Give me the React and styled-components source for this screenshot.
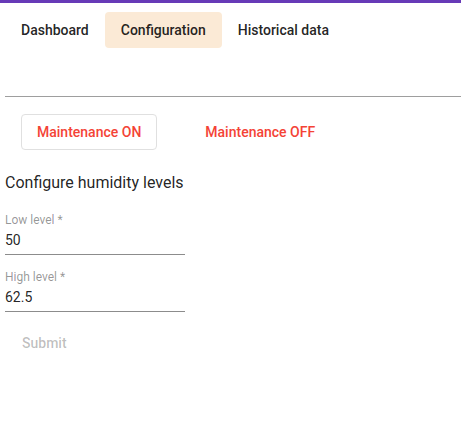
import React, { useState } from "react";
import styled, { createGlobalStyle } from "styled-components";

const GlobalStyle = createGlobalStyle`
    body {
        margin: 0;
        background: #ffffff;
        font-family: Roboto, "Noto Sans", Arial, sans-serif;
        color: rgba(0, 0, 0, 0.87);
    }
`;

const tabs = ["Dashboard", "Configuration", "Historical data"];

const App = () => {
    const [tab, setTab] = useState("Configuration");
    const [low, setLow] = useState("50");
    const [high, setHigh] = useState("62.5");

    return (
        <>
            <GlobalStyle />
            <Page>
                <TopBar />
                <TabRow>
                    {tabs.map((t) => (
                        <Tab key={t} $active={t === tab} onClick={() => setTab(t)}>
                            {t}
                        </Tab>
                    ))}
                </TabRow>
                <Divider />
                <Content>
                    <MaintenanceRow>
                        <RedButton $outlined>Maintenance ON</RedButton>
                        <RedButton>Maintenance OFF</RedButton>
                    </MaintenanceRow>
                    <Heading>Configure humidity levels</Heading>
                    <Field $gap={18}>
                        <Label>Low level *</Label>
                        <Input value={low} onChange={(e) => setLow(e.target.value)} />
                    </Field>
                    <Field $gap={15}>
                        <Label>High level *</Label>
                        <Input value={high} onChange={(e) => setHigh(e.target.value)} />
                    </Field>
                    <Submit disabled>Submit</Submit>
                </Content>
            </Page>
        </>
    );
};

export default App;

const Page = styled.div`
    width: 100%;
    min-height: 437px;
    display: flex;
    flex-direction: column;
`;

const TopBar = styled.div`
    height: 3px;
    background-color: #673ab7;
`;

const TabRow = styled.div`
    display: flex;
    flex-direction: row;
    padding-left: 5px;
    margin-top: 9px;
`;

const Tab = styled.button`
    height: 36px;
    padding: 6px 16px;
    border: none;
    border-radius: 4px;
    background-color: ${(p) => (p.$active ? "#fbead6" : "transparent")};
    font-family: Roboto, Arial, sans-serif;
    font-size: 14px;
    font-weight: 500;
    line-height: 24px;
    color: rgba(0, 0, 0, 0.87);
    cursor: pointer;
`;

const Divider = styled.div`
    margin: 48px 0 0 5px;
    border-top: 1px solid #9e9e9e;
`;

const Content = styled.div`
    display: flex;
    flex-direction: column;
    align-items: flex-start;
    padding-left: 5px;
`;

const MaintenanceRow = styled.div`
    display: flex;
    flex-direction: row;
    gap: 32px;
    margin-top: 17px;
    padding-left: 16px;
`;

const RedButton = styled.button`
    height: 36px;
    padding: 5px 15px;
    border: 1px solid ${(p) => (p.$outlined ? "#e0e0e0" : "transparent")};
    border-radius: 4px;
    background: transparent;
    font-family: Roboto, Arial, sans-serif;
    font-size: 14px;
    font-weight: 500;
    line-height: 24px;
    color: #f44336;
    cursor: pointer;
`;

const Heading = styled.div`
    margin-top: 21px;
    font-size: 16px;
    line-height: 24px;
    font-weight: 400;
`;

const Field = styled.label`
    display: flex;
    flex-direction: column;
    width: 180px;
    margin-top: ${(p) => p.$gap}px;
    border-bottom: 1px solid #8c8c8c;
    padding-bottom: 4px;
`;

const Label = styled.span`
    font-size: 12px;
    line-height: 14px;
    color: rgba(0, 0, 0, 0.42);
`;

const Input = styled.input`
    margin-top: 3px;
    padding: 0;
    border: none;
    outline: none;
    height: 20px;
    font-family: Roboto, Arial, sans-serif;
    font-size: 14px;
    color: rgba(0, 0, 0, 0.87);
    background: transparent;
`;

const Submit = styled.button`
    margin-top: 13px;
    margin-left: 1px;
    height: 36px;
    padding: 6px 16px;
    border: none;
    background: transparent;
    font-family: Roboto, Arial, sans-serif;
    font-size: 14px;
    font-weight: 500;
    line-height: 24px;
    color: rgba(0, 0, 0, 0.26);
`;
